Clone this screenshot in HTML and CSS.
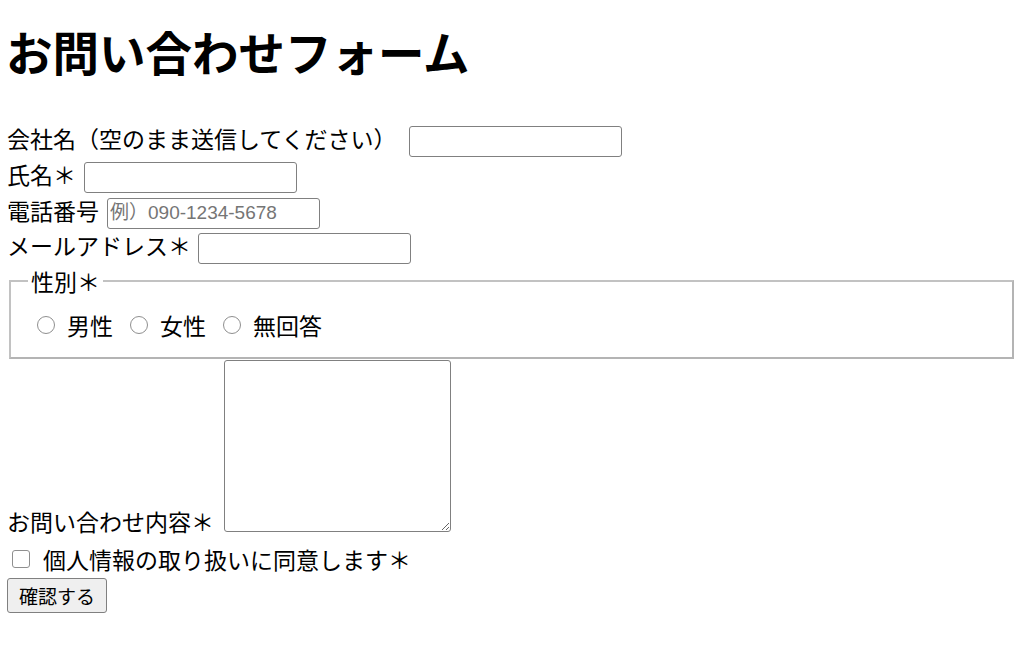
FILE: index.html
```html
<!DOCTYPE html>
<html lang="ja">
<head>
<meta charset="utf-8">
<title>お問い合わせフォーム</title>
<link rel="stylesheet" href="styles.css">
</head>
<body>
<h1 class="title">お問い合わせフォーム</h1>
<form class="form">
  <div class="row">
    <label class="row-label" for="company">会社名（空のまま送信してください）</label>
    <input class="field field-company" type="text" id="company">
  </div>
  <div class="row">
    <label class="row-label" for="name">氏名＊</label>
    <input class="field" type="text" id="name">
  </div>
  <div class="row">
    <label class="row-label" for="tel">電話番号</label>
    <input class="field field-tel" type="tel" id="tel" placeholder="例）090-1234-5678">
  </div>
  <div class="row">
    <label class="row-label" for="mail">メールアドレス＊</label>
    <input class="field field-mail" type="email" id="mail">
  </div>
  <fieldset class="gender">
    <legend class="gender-legend">性別＊</legend>
    <div class="options">
      <label class="opt"><input class="radio" type="radio" name="gender" value="male">男性</label>
      <label class="opt"><input class="radio" type="radio" name="gender" value="female">女性</label>
      <label class="opt"><input class="radio" type="radio" name="gender" value="none">無回答</label>
    </div>
  </fieldset>
  <div class="msg-row">
    <label class="msg-label" for="msg">お問い合わせ内容＊</label>
    <textarea class="msg" id="msg"></textarea>
  </div>
  <div class="check-row">
    <label class="check-label"><input class="check" type="checkbox">個人情報の取り扱いに同意します＊</label>
  </div>
  <button class="submit" type="submit">確認する</button>
</form>
</body>
</html>
```

FILE: styles.css
```css
html {
  background: #ffffff;
}

body {
  margin: 0;
  padding: 0 8px 0 7px;
  font-family: "Noto Sans CJK JP", "Noto Sans", sans-serif;
  font-size: 23px;
  color: #000000;
}

.title {
  font-size: 46.5px;
  font-weight: 700;
  line-height: 46px;
  margin: 28px 0 50px -1px;
}

.form {
  margin: 0;
}

.row {
  display: flex;
  align-items: center;
  height: 35.67px;
}

.row-label {
  line-height: 33px;
  margin-bottom: 6px;
  white-space: nowrap;
}

.field {
  box-sizing: border-box;
  width: 213px;
  height: 31px;
  margin: 0 0 0 8px;
  padding: 0 2px;
  border: 1px solid #808080;
  border-radius: 3px;
  background: #ffffff;
  font-family: "Liberation Sans", "Noto Sans CJK JP", sans-serif;
  font-size: 19px;
  color: #000000;
}

.field::placeholder {
  color: #757575;
}

.field-company {
  margin-left: 12px;
}

.field-mail {
  margin-left: 7px;
}

.gender {
  margin: -2px 2px 0;
  padding: 11px 17px 15px;
  border: 2px solid #c2c2c2;
  border-right-color: #b4b4b4;
  border-bottom-color: #b4b4b4;
}

.gender-legend {
  padding: 0 3px;
  line-height: 33px;
}

.options {
  display: flex;
  align-items: center;
  height: 33px;
}

.opt {
  display: flex;
  align-items: center;
  margin-right: 17px;
}

.radio {
  appearance: none;
  -webkit-appearance: none;
  box-sizing: border-box;
  width: 18px;
  height: 18px;
  margin: 0 12px 0 9px;
  border: 1.5px solid #8f8f8f;
  border-radius: 50%;
  background: #ffffff;
}

.opt + .opt .radio {
  margin-left: 0;
}

.msg-row {
  display: flex;
  align-items: flex-end;
}

.msg-label {
  line-height: 33px;
  margin-bottom: 5px;
}

.msg {
  box-sizing: border-box;
  width: 227px;
  height: 172px;
  margin: 1px 0 11px 10px;
  border: 1px solid #808080;
  border-radius: 3px;
  padding: 2px;
  font-family: "Liberation Mono", monospace;
  font-size: 19px;
}

.check-row {
  height: 33px;
  display: flex;
  align-items: center;
}

.check-label {
  display: flex;
  align-items: center;
  line-height: 33px;
}

.check {
  appearance: none;
  -webkit-appearance: none;
  box-sizing: border-box;
  width: 18px;
  height: 18px;
  margin: 0 13px 0 5px;
  border: 1.5px solid #8f8f8f;
  border-radius: 3px;
  background: #ffffff;
}

.submit {
  display: block;
  box-sizing: border-box;
  height: 35px;
  margin: 2px 0 0;
  padding: 0 11px;
  border: 1px solid #808080;
  border-radius: 3px;
  background: #efefef;
  font-family: "Noto Sans CJK JP", sans-serif;
  font-size: 19px;
  color: #000000;
}
```
